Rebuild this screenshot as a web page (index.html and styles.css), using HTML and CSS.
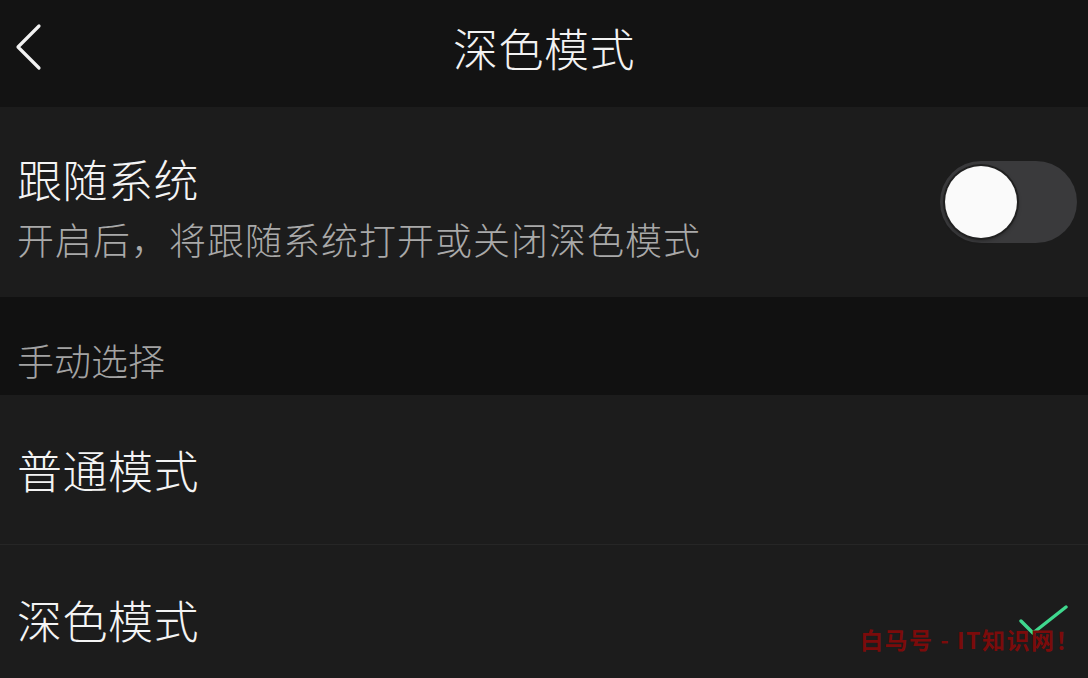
FILE: index.html
```html
<!DOCTYPE html>
<html lang="zh-CN">
<head>
  <meta charset="UTF-8">
  <meta name="viewport" content="width=device-width, initial-scale=1.0">
  <title>深色模式</title>
  <link rel="stylesheet" href="styles.css">
</head>
<body>
  <div class="screen">
    <header class="topbar">
      <button class="back" type="button" aria-label="返回">
        <svg width="30" height="50" viewBox="0 0 30 50">
          <polyline points="24,4 3,25 24,46" fill="none" stroke="#f2f2f2" stroke-width="3.2" stroke-linecap="round" stroke-linejoin="round"/>
        </svg>
      </button>
      <h1 class="title">深色模式</h1>
    </header>

    <section class="card follow">
      <div class="follow-text">
        <div class="item-title">跟随系统</div>
        <div class="item-desc">开启后，将跟随系统打开或关闭深色模式</div>
      </div>
      <div class="switch"><span class="knob"></span></div>
    </section>

    <div class="section-label">手动选择</div>

    <section class="card">
      <div class="row">
        <span class="item-title">普通模式</span>
      </div>
      <div class="row">
        <span class="item-title">深色模式</span>
        <svg class="check" width="52" height="36" viewBox="0 0 52 36">
          <polyline points="3,16 15,28 48,2" fill="none" stroke="#3fd88e" stroke-width="3.4" stroke-linecap="round" stroke-linejoin="round"/>
        </svg>
      </div>
    </section>

    <div class="watermark">白马号 - IT知识网！</div>
  </div>
</body>
</html>
```

FILE: styles.css
```css
body {
  margin: 0;
  background: #121212;
  font-family: "Noto Sans CJK SC", "Noto Sans", sans-serif;
  color: #f2f2f2;
}
.screen {
  position: relative;
  width: 1088px;
  height: 678px;
  overflow: hidden;
  background: #121212;
}
.topbar {
  position: relative;
  height: 107px;
  display: flex;
  align-items: center;
  justify-content: center;
  background: #131313;
}
.back {
  position: absolute;
  left: 15px;
  top: 22px;
  padding: 0;
  border: none;
  background: none;
  cursor: pointer;
}
.title {
  margin: 0;
  font-size: 45px;
  font-weight: 300;
  line-height: 52px;
  margin-top: -12px;
  letter-spacing: 0.5px;
}
.card {
  background: #1c1c1c;
}
.follow {
  display: flex;
  align-items: center;
  justify-content: space-between;
  height: 190px;
  padding: 0 11px 0 17px;
  box-sizing: border-box;
}
.follow-text {
  margin-top: 14px;
}
.item-title {
  font-size: 45px;
  font-weight: 300;
  line-height: 52px;
  letter-spacing: 0.5px;
  color: #f4f4f4;
}
.item-desc {
  margin-top: 8px;
  font-size: 37px;
  font-weight: 300;
  line-height: 52px;
  color: #a9a9a9;
  letter-spacing: 1px;
}
.switch {
  position: relative;
  width: 137px;
  height: 82px;
  border-radius: 41px;
  background: #3a3a3c;
}
.knob {
  position: absolute;
  left: 5px;
  top: 5px;
  width: 72px;
  height: 72px;
  border-radius: 50%;
  background: #fafafa;
  box-shadow: 0 0 0 2px #202020, 0 2px 4px rgba(0, 0, 0, 0.5);
}
.section-label {
  height: 98px;
  box-sizing: border-box;
  padding: 38px 17px 0;
  font-size: 37px;
  font-weight: 300;
  line-height: 50px;
  color: #a3a3a3;
  background: #111111;
}
.row {
  display: flex;
  align-items: center;
  justify-content: space-between;
  height: 150px;
  padding: 0 18px 0 17px;
  box-sizing: border-box;
  border-bottom: 1px solid #262626;
}
.check {
  margin-top: 6px;
}
.watermark {
  position: absolute;
  left: 860px;
  top: 624px;
  font-size: 23px;
  font-weight: 700;
  line-height: 30px;
  color: #7b0b0b;
  letter-spacing: 1.5px;
}
```
